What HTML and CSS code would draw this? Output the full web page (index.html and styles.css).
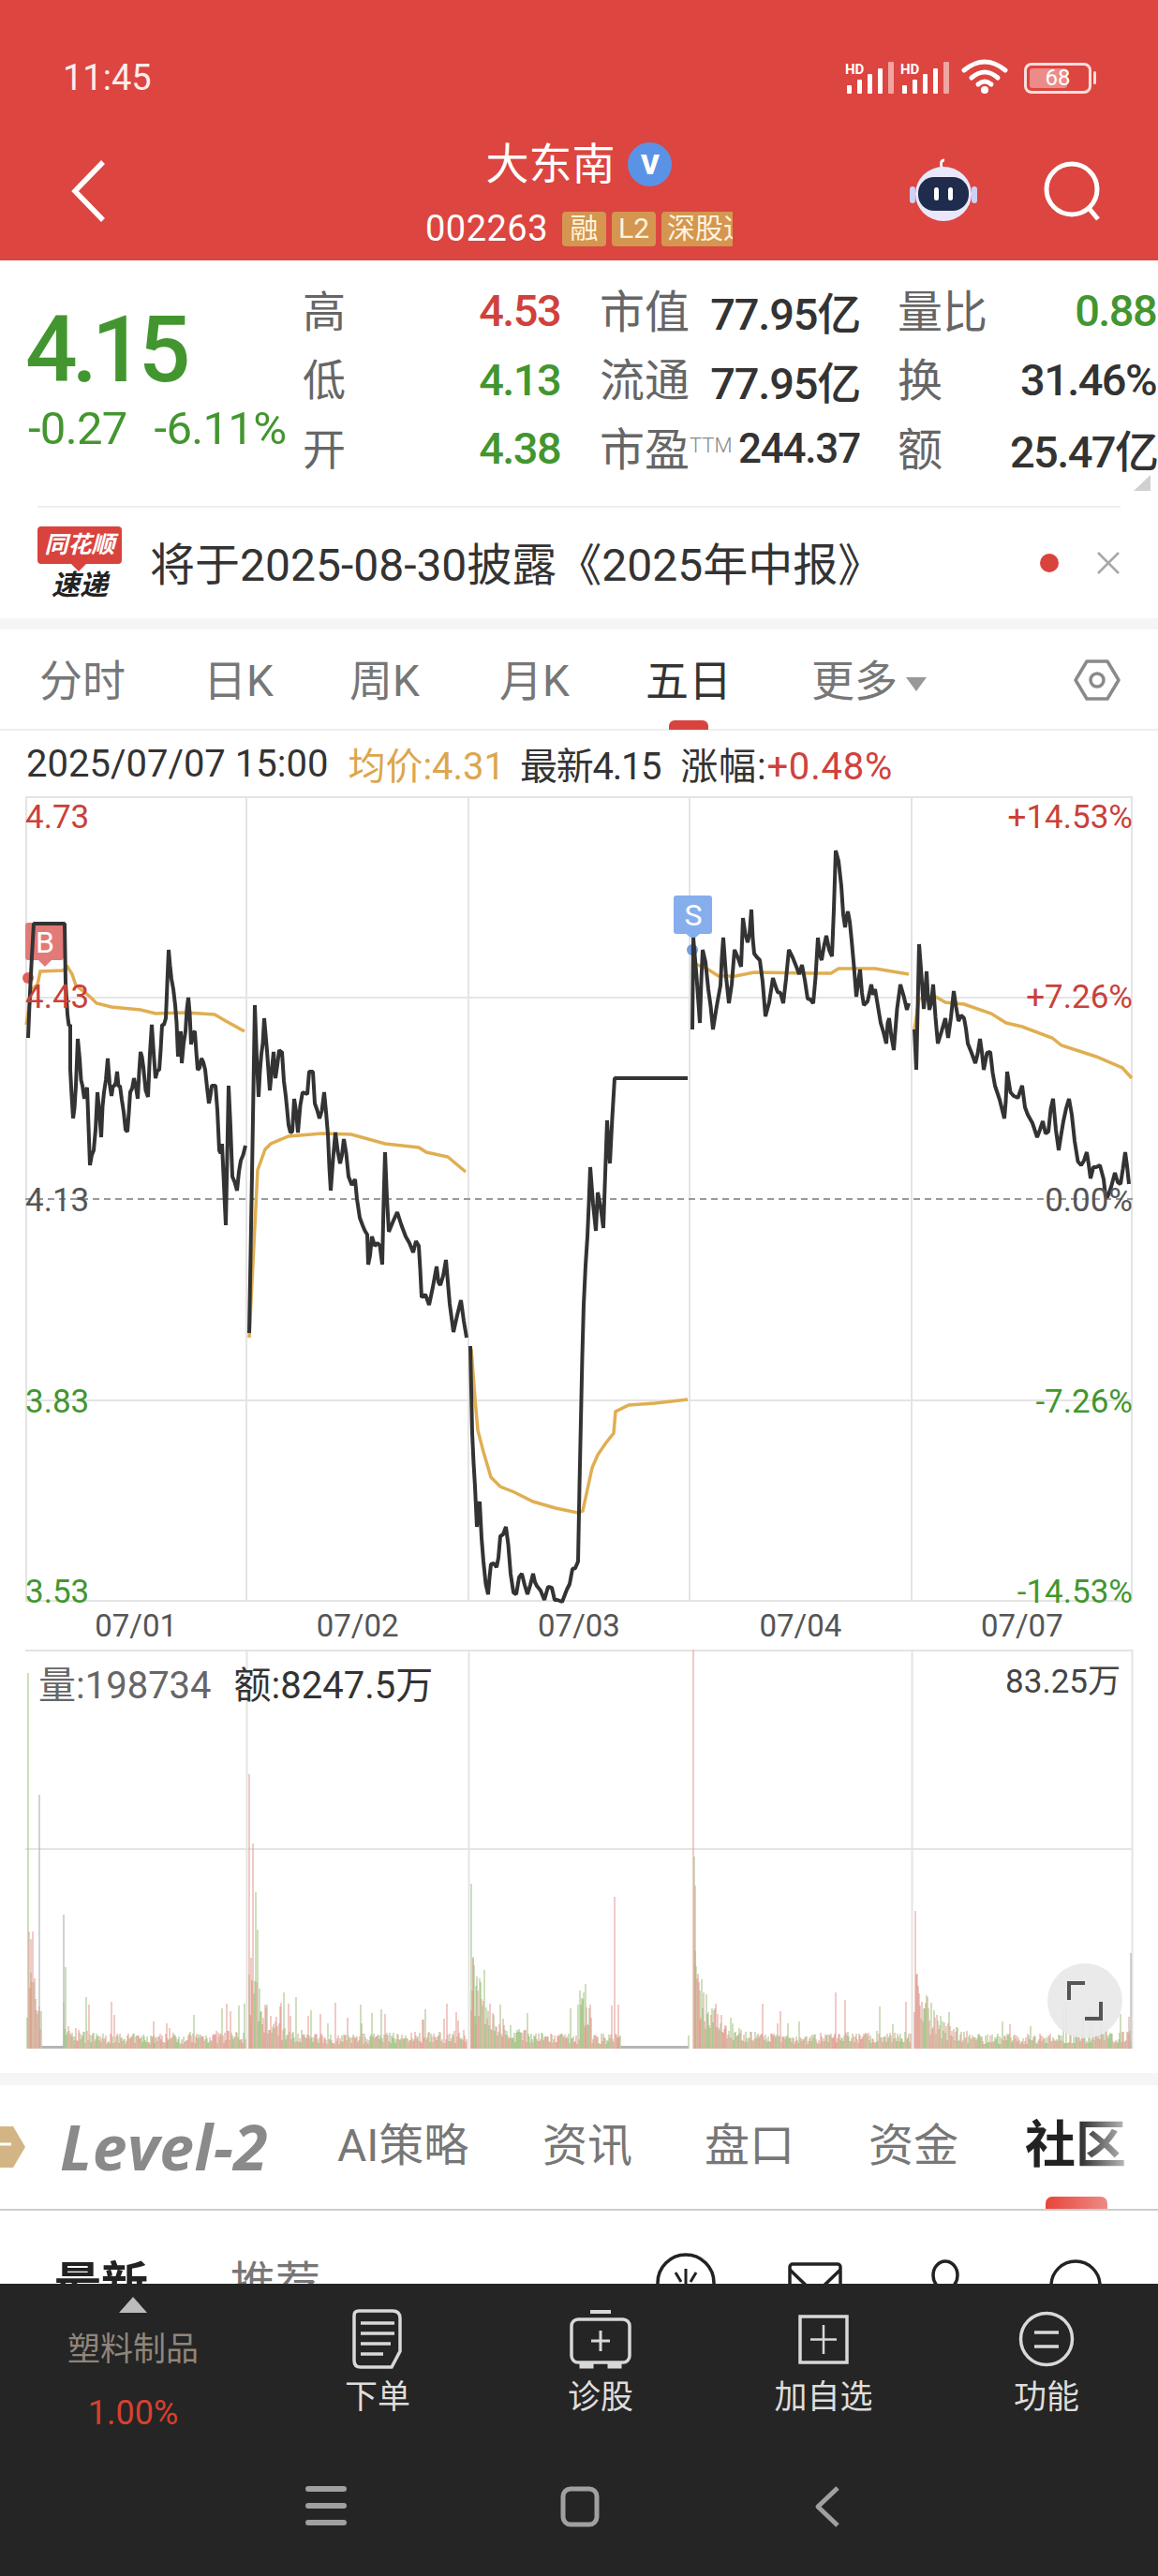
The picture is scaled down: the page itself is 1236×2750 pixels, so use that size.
FILE: index.html
```html
<!DOCTYPE html>
<html lang="zh-CN">
<head>
  <meta charset="UTF-8">
  <meta name="viewport" content="width=device-width, initial-scale=1.0">
  <title>大东南 002263</title>
  <link rel="stylesheet" href="styles.css">
</head>
<body>
<div class="page">

  <header class="top">
    <div class="status">
      <span class="clock">11:45</span>
      <div class="status-icons">
        <svg width="54" height="36" viewBox="0 0 54 36"><text x="0" y="14" class="hd">HD</text><g fill="#fff"><rect x="2" y="26" width="5" height="9" rx="1"/><rect x="13" y="20" width="5" height="15" rx="1"/><rect x="24" y="14" width="5" height="21" rx="1"/><rect x="35" y="8" width="5" height="27" rx="1"/></g><rect x="46" y="1" width="6" height="34" rx="1" fill="#f0a5a2"/></svg>
        <svg width="54" height="36" viewBox="0 0 54 36"><text x="0" y="14" class="hd">HD</text><g fill="#fff"><rect x="2" y="26" width="5" height="9" rx="1"/><rect x="13" y="20" width="5" height="15" rx="1"/><rect x="24" y="14" width="5" height="21" rx="1"/><rect x="35" y="8" width="5" height="27" rx="1"/></g><rect x="46" y="1" width="6" height="34" rx="1" fill="#f0a5a2"/></svg>
        <svg width="50" height="40" viewBox="0 0 50 40"><g fill="none" stroke="#fff" stroke-width="5" stroke-linecap="round"><path d="M3 12 Q25 -6 47 12"/><path d="M11 20 Q25 8 39 20"/><path d="M18 27 Q25 21 32 27"/></g><circle cx="25" cy="33" r="4" fill="#fff"/></svg>
        <div class="battery"><span class="battery-fill"></span><span class="battery-num">68</span></div>
        <span class="battery-tip"></span>
      </div>
    </div>
    <div class="toolbar">
      <svg class="back" width="40" height="68" viewBox="0 0 40 68"><path d="M36 3 L6 34 L36 65" fill="none" stroke="#fff" stroke-width="5.5"/></svg>
      <div class="stock">
        <div class="stock-name">大东南<span class="v-badge">V</span></div>
        <div class="stock-sub">
          <span class="stock-code">002263</span>
          <span class="tag">融</span><span class="tag">L2</span><span class="tag tag-cut"><span>深股通</span></span>
        </div>
      </div>
      <div class="top-right">
        <svg width="72" height="70" viewBox="0 0 72 70">
          <path d="M34 10 Q32 2 37 2" fill="none" stroke="#fff" stroke-width="3"/>
          <ellipse cx="36" cy="38" rx="30" ry="29" fill="#e9e8fb"/>
          <rect x="0" y="30" width="6" height="18" rx="3" fill="#cfd0f2"/>
          <rect x="66" y="30" width="6" height="18" rx="3" fill="#cfd0f2"/>
          <rect x="9" y="20" width="54" height="36" rx="17" fill="#1f2c4e"/>
          <rect x="26" y="31" width="5" height="14" rx="2.5" fill="#fff"/>
          <rect x="41" y="31" width="5" height="14" rx="2.5" fill="#fff"/>
        </svg>
        <svg width="64" height="64" viewBox="0 0 64 64"><circle cx="30" cy="30" r="27" fill="none" stroke="#fff" stroke-width="5"/><path d="M48 50 L58 62" stroke="#fff" stroke-width="5"/></svg>
      </div>
    </div>
  </header>

  <section class="quote">
    <div class="quote-main">
      <div class="price">4.15</div>
      <div class="change"><span>-0.27</span><span>-6.11%</span></div>
    </div>
    <div class="stats">
      <span class="lab">高</span><span class="num up">4.53</span>
      <span class="lab lab-b">市值</span><span class="val">77.95亿</span>
      <span class="lab lab-c">量比</span><span class="num-r down">0.88</span>

      <span class="lab">低</span><span class="num down">4.13</span>
      <span class="lab lab-b">流通</span><span class="val">77.95亿</span>
      <span class="lab lab-c">换</span><span class="num-r">31.46%</span>

      <span class="lab">开</span><span class="num down">4.38</span>
      <span class="lab lab-b">市盈<sup class="ttm">TTM</sup></span><span class="val val-pe">244.37</span>
      <span class="lab lab-c">额</span><span class="num-r">25.47亿</span>
    </div>
    <span class="corner"></span>
  </section>

  <section class="news">
    <div class="logo">
      <div class="logo-top">同花顺</div>
      <div class="logo-bottom">速递</div>
    </div>
    <div class="news-text">将于2025-08-30披露《2025年中报》</div>
    <span class="news-dot"></span>
    <svg width="26" height="26" viewBox="0 0 26 26"><path d="M2 2 L24 24 M24 2 L2 24" stroke="#a8a8a8" stroke-width="2.5"/></svg>
  </section>

  <div class="band"></div>

  <nav class="periods">
    <span>分时</span><span>日K</span><span>周K</span><span>月K</span>
    <span class="on">五日</span>
    <span class="more">更多<i class="caret"></i></span>
    <svg class="hex" width="50" height="50" viewBox="0 0 50 50"><path d="M14 5 H36 L48 25 L36 45 H14 L2 25 Z" fill="none" stroke="#8a8a8a" stroke-width="3.5" stroke-linejoin="round"/><circle cx="25" cy="25" r="7" fill="none" stroke="#8a8a8a" stroke-width="3.5"/></svg>
  </nav>

  <div class="info">
    <span>2025/07/07 15:00</span>
    <span class="avg">均价:4.31</span>
    <span class="last">最新4.15</span>
    <span class="rise">涨幅:<em class="up">+0.48%</em></span>
  </div>

  <svg class="price-chart" width="1236" height="872" viewBox="0 850 1236 872">
    <g class="grid">
      <path d="M27 851 H1209 M27 1065 H1209 M27 1495 H1209 M27 1709 H1209"/>
      <path d="M28 850 V1709 M263 850 V1709 M500 850 V1709 M736 850 V1709 M973 850 V1709 M1208 850 V1709"/>
    </g>
    <path class="mid" d="M27 1280 H1209"/>

    <rect x="27" y="985" width="41" height="40" rx="3" fill="#e27a78"/>
    <path d="M40 1024 H56 L48 1032 Z" fill="#e27a78"/>
    <text x="48" y="1017" class="flag">B</text>
    <circle cx="30" cy="1044" r="6" fill="#e0605c"/>

    <rect x="719" y="956" width="41" height="41" rx="3" fill="#86aeec"/>
    <path d="M731 996 H748 L740 1003 Z" fill="#86aeec"/>
    <text x="740" y="988" class="flag">S</text>
    <circle cx="739" cy="1014" r="6" fill="#6f9de4"/>

    <g class="avg-line">
      <polyline points="28,1094 34,1056 40,1051 43,1037 67,1036 72,1032 77,1040 81,1052 95,1063 103,1071 119,1075 150,1078 166,1082 198,1081 229,1083 241,1090 261,1101"/>
      <polyline points="266,1428 275,1249 283,1227 289,1221 308,1213 344,1210 375,1211 411,1221 447,1225 455,1230 478,1235 497,1251"/>
      <polyline points="503,1440 507,1493 510,1527 516,1550 524,1577 534,1587 549,1593 569,1603 593,1610 617,1615 622,1613 632,1567 638,1553 647,1540 655,1530 657,1507 671,1500 699,1498 734,1494"/>
      <polyline points="740,1028 756,1035 767,1042 785,1042 805,1038 868,1039 887,1039 895,1034 934,1034 970,1040"/>
      <polyline points="976,1099 981,1066 997,1063 1009,1070 1029,1072 1058,1082 1074,1092 1091,1096 1123,1108 1133,1116 1170,1128 1198,1140 1208,1151"/>
    </g>

    <g class="price-line">
      <polyline points="30,1108 34,1021 36,986 69,986 70,1049 72,1083 75,1094 75,1142 78,1194 81,1159 83,1109 85,1130 88,1159 90,1173 93,1161 96,1244 100,1228 104,1166 108,1214 111,1166 115,1130 119,1170 122,1159 125,1144 128,1159 132,1187 136,1208 139,1166 143,1151 147,1173 150,1123 153,1139 158,1171 162,1094 166,1151 170,1142 173,1094 177,1087 180,1014 183,1045 187,1073 190,1128 193,1101 194,1135 198,1101 201,1065 204,1115 208,1101 211,1142 215,1130 219,1142 223,1178 226,1159 230,1159 234,1228 237,1221 241,1308 244,1159 248,1256 253,1271 257,1239 262,1223"/>
      <polyline points="266,1423 272,1073 276,1171 279,1125 282,1087 288,1164 292,1123 294,1151 298,1121 301,1123 305,1170 308,1201 312,1208 314,1173 318,1209 323,1166 328,1168 330,1144 334,1144 336,1178 341,1194 346,1166 350,1211 353,1271 358,1209 363,1242 367,1216 372,1256 379,1259 381,1280 387,1308 392,1318 393,1350 397,1320 403,1327 408,1350 411,1230 415,1315 424,1294 433,1320 441,1337 447,1330 450,1385 458,1393 466,1352 470,1372 476,1345 484,1422 492,1388 498,1428"/>
      <polyline points="502,1437 504,1530 507,1587 509,1630 512,1603 516,1667 521,1702 524,1670 530,1673 534,1640 540,1630 545,1680 551,1702 557,1680 563,1702 569,1680 573,1693 581,1708 589,1695 595,1708 605,1697 611,1675 617,1667 620,1517 623,1393 627,1320 630,1246 636,1314 638,1273 644,1311 648,1196 651,1242 656,1151 734,1151"/>
      <polyline points="739,1099 740,1001 747,1092 750,1014 756,1056 761,1099 769,1052 772,1001 778,1071 784,1014 791,1032 793,980 798,1006 802,971 805,1018 811,1025 817,1085 825,1044 830,1059 836,1071 842,1014 850,1032 856,1030 862,1066 868,1071 873,1001 877,1025 882,999 888,1021 892,908 898,946 902,990 905,973 909,1004 914,1064 918,1035 922,1073 930,1051 934,1056 940,1092 946,1114 949,1087 954,1121 961,1051 968,1078 970,1071"/>
      <polyline points="976,1099 978,1142 981,1008 986,1077 989,1037 992,1078 996,1051 1001,1114 1009,1087 1012,1108 1018,1058 1023,1090 1029,1087 1033,1114 1041,1135 1046,1109 1050,1142 1057,1123 1062,1159 1072,1194 1075,1144 1082,1170 1091,1159 1097,1190 1107,1214 1113,1197 1119,1208 1124,1173 1130,1228 1135,1197 1141,1173 1147,1218 1154,1244 1160,1230 1164,1258 1170,1246 1178,1259 1182,1278 1190,1252 1196,1264 1201,1230 1205,1264"/>
    </g>

    <g class="axis">
      <text x="27" y="884" class="t-up">4.73</text>
      <text x="27" y="1076" class="t-up">4.43</text>
      <text x="27" y="1293" class="t-flat">4.13</text>
      <text x="27" y="1508" class="t-down">3.83</text>
      <text x="27" y="1711" class="t-down">3.53</text>
      <text x="1209" y="884" class="t-up t-end">+14.53%</text>
      <text x="1209" y="1076" class="t-up t-end">+7.26%</text>
      <text x="1209" y="1293" class="t-flat t-end">0.00%</text>
      <text x="1209" y="1508" class="t-down t-end">-7.26%</text>
      <text x="1209" y="1711" class="t-down t-end">-14.53%</text>
    </g>
  </svg>

  <div class="dates">
    <span>07/01</span><span>07/02</span><span>07/03</span><span>07/04</span><span>07/07</span>
  </div>

  <div class="volume">
    <svg id="volChart" width="1236" height="427" viewBox="0 1761 1236 427">
      <g class="grid">
        <path d="M27 1762 H1209 M27 1974 H1209"/>
        <path d="M263.5 1761 V2187 M500.5 1761 V2187 M973.5 1761 V2187 M1208.5 1761 V2187"/>
      </g>
      <path id="volGreen" class="bars-green"/>
      <path id="volRed" class="bars-red"/>
      <path id="volGray" class="bars-gray"/>
    </svg>
    <div class="vol-label"><span class="vol-count">量:198734</span><span>额:8247.5万</span></div>
    <div class="vol-max">83.25万</div>
    <div class="expand">
      <svg width="40" height="44" viewBox="0 0 40 44"><path d="M20 3 H3 V21 M20 41 H37 V23" fill="none" stroke="#555" stroke-width="4"/></svg>
    </div>
  </div>

  <div class="gap"></div>
  <div class="band band-b"></div>

  <nav class="tabs">
    <svg class="gem" width="27" height="44" viewBox="0 0 27 44"><path d="M0 0 H14 L27 22 L14 44 H0 Z" fill="#d3b585"/><path d="M0 19 H12" stroke="#fff" stroke-width="3"/></svg>
    <span class="level">Level-2</span>
    <span class="t-ai">AI策略</span>
    <span class="t-a">资讯</span>
    <span class="t-b">盘口</span>
    <span class="t-c">资金</span>
    <span class="t-on">社区</span>
    <i class="tab-bar"></i>
  </nav>

  <div class="feed">
    <span class="feed-new">最新</span>
    <span class="feed-rec">推荐</span>
    <div class="feed-icons">
      <svg width="66" height="66" viewBox="0 0 66 66"><circle cx="33" cy="33" r="30" fill="none" stroke="#222" stroke-width="3.5"/><path d="M33 18 V48 M22 22 L28 32 M44 22 L38 32" stroke="#222" stroke-width="3" fill="none"/></svg>
      <svg width="58" height="56" viewBox="0 0 58 56"><rect x="2" y="2" width="54" height="50" rx="3" fill="none" stroke="#222" stroke-width="3.5"/><path d="M2 8 L29 34 L56 8" fill="none" stroke="#222" stroke-width="3.5"/></svg>
      <svg width="32" height="56" viewBox="0 0 32 56"><ellipse cx="16" cy="18" rx="13" ry="15" fill="none" stroke="#222" stroke-width="3.5"/></svg>
      <svg width="58" height="56" viewBox="0 0 58 56"><circle cx="29" cy="29" r="26" fill="none" stroke="#222" stroke-width="3.5"/></svg>
    </div>
  </div>

  <footer class="bottom">
    <div class="actions">
      <div class="sector">
        <i class="sector-arrow"></i>
        <div class="sector-name">塑料制品</div>
        <div class="sector-pct">1.00%</div>
      </div>
      <div class="action">
        <svg width="64" height="66" viewBox="0 0 64 66"><path d="M12 3 H48 Q56 3 56 11 V46 L47 63 H14 Q7 63 7 56 V8 Q7 3 12 3 Z" fill="none" stroke="#d8d8d8" stroke-width="3.5"/><path d="M14 16 H50 M14 27 H50 M14 38 H46 M14 49 H38" stroke="#d8d8d8" stroke-width="3.5"/></svg>
        <span>下单</span>
      </div>
      <div class="action">
        <svg width="66" height="66" viewBox="0 0 66 66"><path d="M22 4 H44" stroke="#d8d8d8" stroke-width="4"/><rect x="2" y="12" width="62" height="46" rx="7" fill="none" stroke="#d8d8d8" stroke-width="3.5"/><path d="M33 24 V46 M23 35 H43" stroke="#d8d8d8" stroke-width="3"/><path d="M12 58 V63 H24 V58 M42 58 V63 H54 V58" fill="#d8d8d8" stroke="#d8d8d8" stroke-width="3"/></svg>
        <span>诊股</span>
      </div>
      <div class="action">
        <svg width="66" height="66" viewBox="0 0 66 66"><rect x="8" y="9" width="50" height="49" fill="none" stroke="#d8d8d8" stroke-width="3.5"/><path d="M33 18 V49 M19 33.5 H47" stroke="#d8d8d8" stroke-width="2.5"/></svg>
        <span>加自选</span>
      </div>
      <div class="action">
        <svg width="66" height="66" viewBox="0 0 66 66"><circle cx="33" cy="33" r="27.5" fill="none" stroke="#d8d8d8" stroke-width="3.5"/><path d="M20 26 H46 M20 41 H46" stroke="#d8d8d8" stroke-width="3.5"/></svg>
        <span>功能</span>
      </div>
    </div>
    <div class="navbar">
      <svg width="44" height="44" viewBox="0 0 44 44"><path d="M3 4 H41 M3 22 H41 M3 40 H41" stroke="#a0a0a0" stroke-width="6" stroke-linecap="round"/></svg>
      <svg width="44" height="46" viewBox="0 0 44 46"><rect x="4" y="4" width="36" height="38" rx="8" fill="none" stroke="#a0a0a0" stroke-width="5"/></svg>
      <svg width="30" height="46" viewBox="0 0 30 46"><path d="M26 3 L5 23 L26 43" fill="none" stroke="#a0a0a0" stroke-width="5" stroke-linejoin="round"/></svg>
    </div>
  </footer>
</div>
<script src="chart.js"></script>
</body>
</html>
```

FILE: styles.css
```css
* {
  box-sizing: border-box;
}

body {
  margin: 0;
  background: #fff;
  font-family: Roboto, "Noto Sans CJK SC", sans-serif;
  color: #333;
}

.page {
  width: 1236px;
  height: 2750px;
  overflow: hidden;
}

.up { color: #cf423c; font-style: normal; }
.down { color: #43962f; }

/* red header */
.top {
  height: 278px;
  background: #dc4540;
  color: #fff;
}

.status {
  height: 130px;
  padding: 58px 66px 0 67px;
  display: flex;
  justify-content: space-between;
}

.clock {
  font-size: 38px;
  line-height: 50px;
  color: #fdeceb;
}

.status-icons {
  display: flex;
  align-items: center;
  height: 50px;
  gap: 11px;
}

.status-icons svg:nth-child(2) {
  margin-left: -6px;
}

.hd {
  font-size: 15px;
  font-weight: 700;
  fill: #fff;
}

.battery {
  position: relative;
  width: 72px;
  height: 33px;
  margin-left: 6px;
  border: 3px solid #fbdedc;
  border-radius: 8px;
  text-align: center;
}

.battery-fill {
  position: absolute;
  left: 3px;
  top: 3px;
  bottom: 3px;
  width: 40px;
  border-radius: 3px;
  background: #ec8b87;
}

.battery-num {
  position: relative;
  font-size: 24px;
  line-height: 27px;
  display: block;
}

.battery-tip {
  width: 3px;
  height: 14px;
  margin-left: -9px;
  border-radius: 2px;
  background: #fbdedc;
}

.toolbar {
  height: 148px;
  padding: 0 58px 0 74px;
  display: grid;
  grid-template-columns: 1fr auto 1fr;
  align-items: center;
}

.stock {
  margin-right: 16px;
  text-align: center;
}

.stock-name {
  height: 60px;
  font-size: 46px;
  line-height: 60px;
  display: flex;
  justify-content: center;
  align-items: center;
  gap: 14px;
}

.v-badge {
  width: 47px;
  height: 47px;
  border-radius: 50%;
  background: #5a93e6;
  font-size: 30px;
  line-height: 47px;
  font-weight: 900;
}

.stock-sub {
  margin-top: 20px;
  display: flex;
  align-items: center;
  gap: 6px;
  height: 38px;
}

.stock-code {
  font-size: 38px;
  letter-spacing: 0.5px;
  margin-right: 9px;
}

.tag {
  height: 37px;
  min-width: 47px;
  padding: 0 6px;
  background: #d49650;
  border-radius: 4px;
  font-size: 30px;
  line-height: 36px;
  text-align: center;
  color: #fff3dc;
  white-space: nowrap;
}

.tag-cut {
  width: 76px;
  overflow: hidden;
  border-radius: 4px 0 0 4px;
  text-align: left;
}

.top-right {
  display: flex;
  justify-content: flex-end;
  align-items: center;
  gap: 71px;
}

/* quote numbers */
.quote {
  position: relative;
  height: 262px;
  display: flex;
  background: #fff;
}

.quote-main {
  width: 323px;
  padding: 38px 0 0 27px;
}

.price {
  font-size: 98px;
  line-height: 116px;
  font-weight: 500;
  letter-spacing: -6px;
  color: #43962f;
}

.change {
  margin: 0 0 0 3px;
  font-size: 49px;
  line-height: 52px;
  letter-spacing: -0.7px;
  color: #43962f;
  display: flex;
  gap: 29px;
  white-space: nowrap;
}

.stats {
  margin-top: 17px;
  height: 220px;
  display: grid;
  grid-template-columns: 100px 175px 157px 163px 160px 156px;
  grid-auto-rows: 73.5px;
  align-items: center;
  white-space: nowrap;
}

.lab {
  margin-top: -6px;
  font-size: 46px;
  color: #666;
}

.lab-b {
  padding-left: 42px;
  font-size: 48px;
}

.lab-c {
  padding-left: 40px;
  font-size: 48px;
}

.ttm {
  font-size: 22px;
  font-weight: 300;
  color: #888;
  vertical-align: 14px;
  line-height: 0;
}

.num, .num-r {
  font-size: 47px;
  font-weight: 500;
  letter-spacing: -1.6px;
  text-align: right;
}

.val {
  font-size: 47px;
  font-weight: 500;
  letter-spacing: -1.2px;
  color: #333;
  text-align: right;
}

.val-pe {
  font-size: 44px;
}

.num-r:not(.down) {
  color: #333;
}

.corner {
  position: absolute;
  right: 8px;
  top: 229px;
  border-left: 18px solid transparent;
  border-bottom: 17px solid #d0d0d0;
}

/* news strip */
.news {
  height: 120px;
  margin: 0 40px;
  border-top: 2px solid #eee;
  display: flex;
  align-items: center;
}

.logo {
  width: 90px;
  margin-right: 30px;
  text-align: center;
  font-style: italic;
  font-weight: 700;
}

.logo-top {
  position: relative;
  height: 40px;
  background: #d9433d;
  border-radius: 4px;
  color: #fff;
  font-size: 25px;
  line-height: 40px;
  white-space: nowrap;
}

.logo-top::after {
  content: "";
  position: absolute;
  left: 36px;
  top: 40px;
  border: 8px solid transparent;
  border-top-color: #d9433d;
}

.logo-bottom {
  margin-top: 7px;
  font-size: 30px;
  line-height: 32px;
  color: #222;
}

.news-text {
  flex: 1;
  margin-top: -5px;
  font-size: 48px;
  color: #333;
  white-space: nowrap;
}

.news-dot {
  width: 20px;
  height: 20px;
  border-radius: 50%;
  background: #d9433d;
  margin-right: 40px;
}

.band {
  height: 12px;
  background: #f5f5f5;
}

/* chart period tabs */
.periods {
  position: relative;
  height: 108px;
  padding: 0 0 5px 42px;
  border-bottom: 2px solid #eee;
  display: flex;
  align-items: center;
  font-size: 46px;
  color: #777;
  white-space: nowrap;
}

.periods span:nth-child(1) { width: 175px; }
.periods span:nth-child(2) { width: 156px; }
.periods span:nth-child(3) { width: 160px; }
.periods span:nth-child(4) { width: 156px; }

.periods .on {
  position: relative;
  width: 177px;
  color: #333;
}

.periods .on::after {
  content: "";
  position: absolute;
  left: 25px;
  bottom: -23px;
  width: 42px;
  height: 10px;
  border-radius: 6px 6px 0 0;
  background: #d9433d;
}

.caret {
  display: inline-block;
  margin-left: 9px;
  vertical-align: 5px;
  border: 11px solid transparent;
  border-top: 15px solid #999;
  border-bottom: 0;
}

.hex {
  position: absolute;
  right: 40px;
  top: 29px;
}

/* info line */
.info {
  height: 70px;
  padding: 0 0 0 28px;
  display: flex;
  align-items: center;
  gap: 21px;
  font-size: 40px;
  color: #333;
  white-space: nowrap;
}

.info em {
  font-style: normal;
}

.avg {
  margin-right: -5px;
  color: #dca64e;
}

.last {
  letter-spacing: -1.3px;
}

.rise {
  letter-spacing: 0.8px;
}

/* price chart */
.price-chart {
  display: block;
  margin-bottom: -13px;
}

.grid path {
  fill: none;
  stroke: #e4e4e4;
  stroke-width: 2;
}

.mid {
  stroke: #999;
  stroke-width: 2;
  stroke-dasharray: 7 5;
}

.avg-line polyline {
  fill: none;
  stroke: #e0ae52;
  stroke-width: 3.5;
}

.price-line polyline {
  fill: none;
  stroke: #333;
  stroke-width: 4;
  stroke-linejoin: bevel;
}

.flag {
  font-size: 32px;
  fill: #fff;
  text-anchor: middle;
}

.axis text {
  font-size: 35px;
}

.t-up { fill: #c9413b; }
.t-down { fill: #43962f; }
.t-flat { fill: #555; }
.axis .t-end { text-anchor: end; }

.dates {
  height: 52px;
  padding: 0 27px;
  display: grid;
  grid-template-columns: repeat(5, 1fr);
  align-items: center;
  text-align: center;
  font-size: 33px;
  color: #555;
}

/* volume chart */
.volume {
  position: relative;
  height: 426px;
}

.volume svg {
  display: block;
}

.bars-green { fill: none; stroke: #9fc07f; stroke-width: 1.2; stroke-opacity: 0.85; }
.bars-red { fill: none; stroke: #e19a8e; stroke-width: 1.2; stroke-opacity: 0.85; }
.bars-gray { fill: none; stroke: #b5b5b5; stroke-width: 1.2; }

.vol-label {
  position: absolute;
  left: 41px;
  top: 6px;
  display: flex;
  gap: 24px;
  font-size: 40px;
  color: #333;
  white-space: nowrap;
}

.vol-count {
  color: #666;
}

.vol-max {
  position: absolute;
  right: 40px;
  top: 5px;
  font-size: 35px;
  color: #444;
}

.expand {
  position: absolute;
  left: 1118px;
  top: 335px;
  width: 80px;
  height: 80px;
  border-radius: 50%;
  background: rgba(232, 232, 232, 0.92);
  display: flex;
  align-items: center;
  justify-content: center;
}

.gap {
  height: 26px;
}

.band-b {
  height: 13px;
}

/* lower tabs */
.tabs {
  position: relative;
  height: 134px;
  border-bottom: 2px solid #ccc;
  font-size: 48px;
  color: #777;
  white-space: nowrap;
}

.tabs span {
  position: absolute;
  top: 30px;
  line-height: 70px;
}

.gem {
  position: absolute;
  left: 0;
  top: 44px;
}

.tabs .level {
  left: 64px;
  font-size: 66px;
  font-weight: 700;
  font-style: italic;
  color: #8a8a8a;
  font-family: "Open Sans", sans-serif;
  letter-spacing: 0.5px;
}

.tabs .t-ai { left: 360px; }
.tabs .t-a { left: 579px; }
.tabs .t-b { left: 752px; }
.tabs .t-c { left: 927px; }

.tabs .t-on {
  left: 1094px;
  font-size: 54px;
  font-weight: 700;
  background: linear-gradient(90deg, #222 50%, #bbb 100%);
  -webkit-background-clip: text;
  background-clip: text;
  color: transparent;
}

.tab-bar {
  position: absolute;
  left: 1116px;
  bottom: 0;
  width: 66px;
  height: 13px;
  border-radius: 7px 7px 0 0;
  background: linear-gradient(90deg, #e8453c, #ee8a84);
}

/* feed head, mostly hidden by the bottom bar */
.feed {
  height: 78px;
  position: relative;
  overflow: hidden;
  white-space: nowrap;
}

.feed-new {
  position: absolute;
  left: 58px;
  top: 38px;
  font-size: 50px;
  font-weight: 700;
  color: #222;
}

.feed-rec {
  position: absolute;
  left: 246px;
  top: 38px;
  font-size: 48px;
  color: #777;
}

.feed-icons svg {
  position: absolute;
}

.feed-icons svg:nth-child(1) { left: 699px; top: 44px; }
.feed-icons svg:nth-child(2) { left: 841px; top: 55px; }
.feed-icons svg:nth-child(3) { left: 993px; top: 51px; }
.feed-icons svg:nth-child(4) { left: 1119px; top: 51px; }

/* dark bottom bar */
.bottom {
  height: 312px;
  background: #252525;
  color: #ddd;
}

.actions {
  height: 192px;
  display: grid;
  grid-template-columns: 284px repeat(4, 238px);
}

.sector {
  text-align: center;
  padding-top: 14px;
}

.sector-arrow {
  display: block;
  width: 0;
  margin: 0 auto 20px;
  border: 15px solid transparent;
  border-bottom: 17px solid #bcbcbc;
  border-top: 0;
}

.sector-name {
  font-size: 35px;
  line-height: 40px;
  color: #8f857b;
}

.sector-pct {
  margin-top: 26px;
  font-size: 36px;
  line-height: 42px;
  color: #d8402e;
}

.action {
  padding-top: 26px;
  display: flex;
  flex-direction: column;
  align-items: center;
  font-size: 35px;
}

.action span {
  margin-top: 8px;
  line-height: 44px;
}

.navbar {
  height: 120px;
  padding: 23px 0 0 326px;
  display: flex;
  align-items: flex-start;
  gap: 227px;
}
```

FILE: chart.js
```js
// volume bars: one spiky list per colour, plus a noisy decaying floor per session
var BASE = 2187;
var sessions = [
  { from: 29, to: 262, peak: 2090, quiet: [[44, 68]] },
  { from: 266, to: 498, peak: 2100 },
  { from: 503, to: 735, peak: 2090, quiet: [[662, 735]], bump: [618, 632] },
  { from: 740, to: 972, peak: 2085 },
  { from: 976, to: 1207, peak: 2100 }
];

var spikes = {
  green: [[30, 1786], [70, 2100], [273, 2020], [275, 2060], [503, 2011], [505, 2089], [508, 2120], [625, 2118], [741, 1982], [747, 2125]],
  red: [[31, 2062], [33, 2070], [35, 2062], [164, 2158], [178, 2160], [266, 1894], [270, 1968], [268, 2090], [411, 2150], [656, 2025], [660, 2140], [740, 1761], [742, 2013], [745, 2107], [892, 2127], [977, 2040], [979, 2107], [981, 2128]],
  gray: [[42, 1916], [68, 2044], [1207, 2085]]
};

// small repeatable generator so the picture stays the same on each load
var seed = 7;
function rnd() {
  seed = (seed * 16807) % 2147483647;
  return seed / 2147483647;
}

var paths = { green: '', red: '', gray: '' };

function bar(color, x, top) {
  paths[color] += 'M' + x + ' ' + BASE + 'V' + top;
}

sessions.forEach(function (s) {
  for (var x = s.from; x <= s.to; x += 1) {
    var quiet = (s.quiet || []).some(function (q) { return x > q[0] && x < q[1]; });
    if (quiet) {
      bar('gray', x, BASE - 3);
      continue;
    }
    var age = (x - s.from) / (s.to - s.from);
    var env = Math.exp(-age * 11) * (BASE - s.peak) + 12 + age * 8;
    if (s.bump && x > s.bump[0] && x < s.bump[1]) env += 46;
    var h = env * (0.3 + rnd() * 0.7);
    if (rnd() < 0.06) h += 14 + rnd() * 26;
    bar(rnd() < 0.55 ? 'green' : 'red', x, Math.round(BASE - h));
  }
});

Object.keys(spikes).forEach(function (color) {
  spikes[color].forEach(function (s) { bar(color, s[0], s[1]); });
});

document.getElementById('volGreen').setAttribute('d', paths.green);
document.getElementById('volRed').setAttribute('d', paths.red);
document.getElementById('volGray').setAttribute('d', paths.gray);

// minute ticks: the hand-read price points are only the turning points, so add
// a little step noise between them (the flat limit-up stretch stays flat)
document.querySelectorAll('.price-line polyline').forEach(function (line) {
  var pts = line.getAttribute('points').split(' ').map(function (p) {
    return p.split(',').map(Number);
  });
  var out = [];
  pts.forEach(function (p, i) {
    out.push(p.join(','));
    var next = pts[i + 1];
    if (!next || next[1] === p[1] || next[0] - p[0] < 3) return;
    var mx = (p[0] + next[0]) / 2;
    var my = (p[1] + next[1]) / 2 + (rnd() - 0.5) * 18;
    out.push(mx + ',' + Math.round(my));
  });
  line.setAttribute('points', out.join(' '));
});
```
